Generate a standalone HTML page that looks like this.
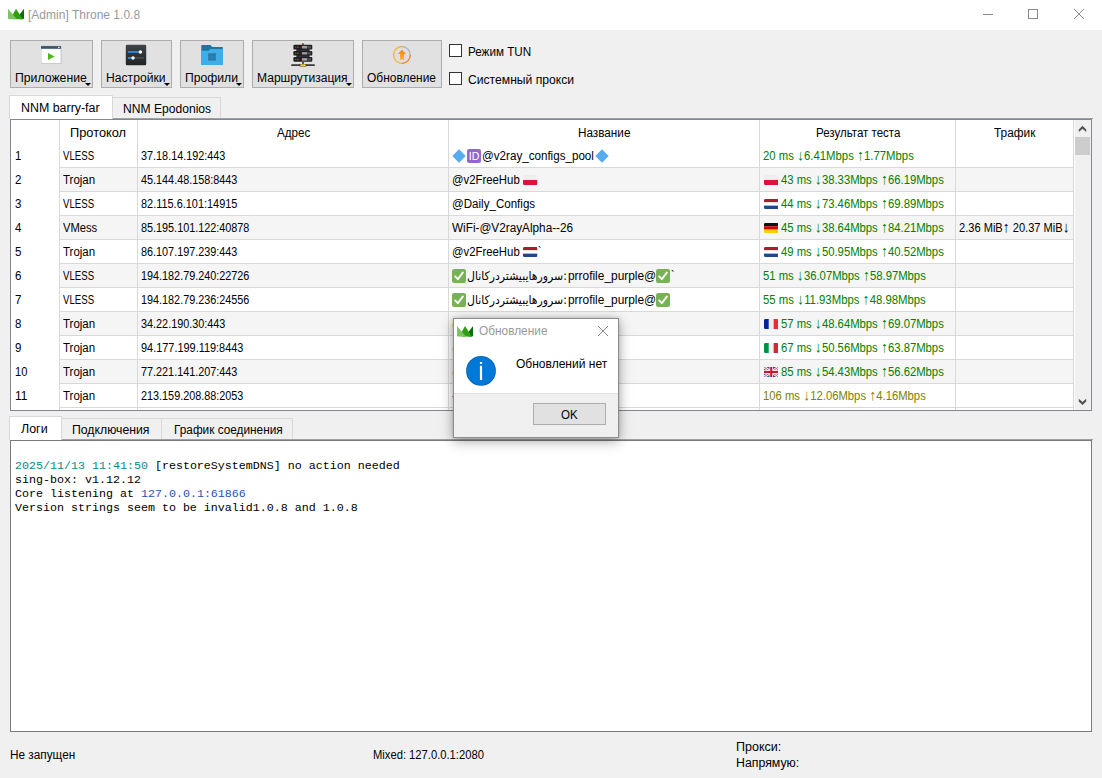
<!DOCTYPE html>
<html lang="ru"><head><meta charset="utf-8"><title>[Admin] Throne 1.0.8</title>
<style>
html,body{margin:0;padding:0;}
body{width:1102px;height:778px;overflow:hidden;background:#f0f0f0;font-family:"Liberation Sans","DejaVu Sans",sans-serif;font-size:12px;}
#win{position:relative;width:1102px;height:778px;overflow:hidden;background:#f0f0f0;}
.a{position:absolute;display:block;}
.t{position:absolute;white-space:nowrap;line-height:14px;font-size:12px;}
.btn{position:absolute;box-sizing:border-box;background:#e1e1e1;border:1px solid #adadad;top:40px;height:48px;}
.arr{position:absolute;width:0;height:0;border-left:3px solid transparent;border-right:3px solid transparent;border-top:3px solid #000;top:83px;}
.cb{position:absolute;box-sizing:border-box;width:13px;height:13px;border:1px solid #333;background:#fff;left:449px;}
.tab{position:absolute;box-sizing:border-box;background:#f0f0f0;border:1px solid #d9d9d9;}
.tab.sel{background:#fff;border-bottom:none;}
.vl{position:absolute;width:1px;background:#d9d9d9;}
.hl{position:absolute;height:1px;background:#d9d9d9;left:60px;width:1014px;}
.alt{position:absolute;left:60px;width:1014px;height:23px;background:#f5f5f5;}
.ar{font-size:15px;line-height:0;}
.log{position:absolute;white-space:pre;font-family:"Liberation Mono","DejaVu Sans Mono",monospace;font-size:11.67px;line-height:14px;left:15px;color:#000;}
</style></head><body><div id="win">
<div class="a" style="left:0;top:0;width:1102px;height:30px;background:#fff"></div>
<svg class="a" style="left:8px;top:8px" width="16" height="12" viewBox="0 0 16 12"><clipPath id="cr8"><path d="M0 0 V9.3 Q0 10.8 1.5 10.8 H14.5 Q16 10.8 16 9.3 V0 Z"/></clipPath><g clip-path="url(#cr8)" transform="translate(0,0.7)"><path d="M16 0 L11.7 5.7 V10.8 H16 Z" fill="#0b6e0b"/><path d="M8 0 L15 10.8 H4.8 V5.7 Z" fill="#2ea012"/><path d="M0 0 V10.8 H9.1 Z" fill="#7cc362"/></g></svg>
<svg class="a" style="left:975px;top:4px" width="120" height="22" viewBox="0 0 120 22" fill="none" stroke="#8a8a8a" stroke-width="1">
<path d="M8 10.5 H18"/><rect x="53.5" y="5.5" width="9" height="9"/><path d="M99 5 L109 15 M109 5 L99 15"/></svg>

<div class="btn" style="left:10px;width:83px"></div>
<div class="btn" style="left:101px;width:71px"></div>
<div class="btn" style="left:180px;width:64px"></div>
<div class="btn" style="left:252px;width:102px"></div>
<div class="btn" style="left:362px;width:80px"></div>
<div class="arr" style="left:85px"></div>
<div class="arr" style="left:164px"></div>
<div class="arr" style="left:236px"></div>
<div class="arr" style="left:346px"></div>

<svg class="a" style="left:41px;top:45px" width="21" height="20" viewBox="0 0 21 20"><rect x="0" y="1.1" width="20" height="17.6" fill="#fff" stroke="#aeb8be" stroke-width="0.7"/><rect x="0" y="1.1" width="20" height="2.7" fill="#3b5566"/><rect x="17" y="1.8" width="1.6" height="1.2" fill="#dfe6ea"/><path d="M7 8 L13.5 11.5 L7 15 Z" fill="#4fb713"/></svg>

<svg class="a" style="left:125px;top:44px" width="22" height="22" viewBox="0 0 22 22"><defs><linearGradient id="gs" x1="0" y1="0" x2="0" y2="1"><stop offset="0" stop-color="#3f4347"/><stop offset="1" stop-color="#212427"/></linearGradient></defs><rect x="0.8" y="0.8" width="20.4" height="20.5" rx="1.2" fill="url(#gs)"/><rect x="2.9" y="13.1" width="16" height="1.7" fill="#4a4d50"/><rect x="18" y="7.2" width="0.9" height="1.5" fill="#4a4d50"/><rect x="2.9" y="7" width="12" height="1.9" fill="#2f86d6"/><rect x="2.9" y="13" width="5" height="1.9" fill="#2f86d6"/><circle cx="15.4" cy="7.9" r="1.75" fill="#fff"/><circle cx="8" cy="13.9" r="1.75" fill="#fff"/></svg>

<svg class="a" style="left:201px;top:45px" width="22" height="20" viewBox="0 0 22 20"><path d="M0.3 0 H9.6 L11.2 2.1 H21.8 V6 H0.3 Z" fill="#2274a0"/><path d="M0 5.8 H7.7 L9.2 4.1 H22 V19.9 H0 Z" fill="#3daee9"/><rect x="7" y="8.1" width="8" height="7.7" fill="#2f88bc"/><g fill="#2a76a6"><rect x="7.6" y="8.9" width="3" height="2.6"/><rect x="11.4" y="8.9" width="3" height="2.6"/><rect x="7.6" y="12.4" width="3" height="2.6"/><rect x="11.4" y="12.4" width="3" height="2.6"/></g></svg>

<svg class="a" style="left:290px;top:42px" width="26" height="25" viewBox="0 0 26 25"><rect x="12" y="1.1" width="1.9" height="2" fill="#8a6d10"/><rect x="6.3" y="7" width="13.3" height="8.6" fill="#2e2f33"/><rect x="3.4" y="2.8" width="18.9" height="4.8" rx="1.2" fill="#1d1e21"/><rect x="11.9" y="3.9" width="5.2" height="2.6" fill="#9b9ba6"/><rect x="17.1" y="3.9" width="3.9" height="2.6" fill="#4c4c54"/><rect x="4.9" y="4.5" width="1.5" height="1.2" fill="#6e5a1c"/><circle cx="7.9" cy="5.2" r="0.75" fill="#4f8f14"/><rect x="9.8" y="4.5" width="1.7" height="1.2" fill="#7c0e16"/><rect x="3.4" y="9.0" width="18.9" height="4.6" rx="1.2" fill="#1d1e21"/><rect x="11.9" y="10.1" width="5.2" height="2.4" fill="#9b9ba6"/><rect x="17.1" y="10.1" width="3.9" height="2.4" fill="#4c4c54"/><rect x="4.9" y="10.6" width="1.5" height="1.2" fill="#6e5a1c"/><circle cx="7.9" cy="11.3" r="0.75" fill="#4f8f14"/><rect x="9.8" y="10.6" width="1.7" height="1.2" fill="#7c0e16"/><rect x="3.4" y="15.0" width="18.9" height="4.8" rx="1.2" fill="#1d1e21"/><rect x="11.9" y="16.1" width="5.2" height="2.6" fill="#9b9ba6"/><rect x="17.1" y="16.1" width="3.9" height="2.6" fill="#4c4c54"/><rect x="4.9" y="16.7" width="1.5" height="1.2" fill="#6e5a1c"/><circle cx="7.9" cy="17.4" r="0.75" fill="#4f8f14"/><rect x="9.8" y="16.7" width="1.7" height="1.2" fill="#7c0e16"/><rect x="12" y="19.8" width="2" height="2.3" fill="#55585c"/><rect x="1.1" y="22.2" width="23.8" height="1.9" rx="0.9" fill="#38393c"/><rect x="9.6" y="21.9" width="6.8" height="2.7" rx="0.7" fill="#2a2b2e"/><rect x="10.2" y="22.3" width="5.6" height="1.9" rx="0.4" fill="#f0cc28"/></svg>

<svg class="a" style="left:392px;top:45px" width="20" height="20" viewBox="0 0 20 20"><defs><linearGradient id="ga" x1="0" y1="0" x2="0" y2="1"><stop offset="0" stop-color="#f67f08"/><stop offset="1" stop-color="#fdb336"/></linearGradient></defs><circle cx="9.9" cy="9.9" r="8.6" fill="#dedfe0"/><g fill="none" stroke-width="1.3"><path d="M9.9 1.5 A8.4 8.4 0 0 0 9.9 18.3" stroke="#fbb03b"/><path d="M9.9 1.5 A8.4 8.4 0 0 1 18.3 9.9" stroke="#b4b4b4"/><path d="M18.3 9.9 A8.4 8.4 0 0 1 9.9 18.3" stroke="#ee7d1a"/></g><path d="M10 4.8 L14.2 8.9 H12 V14.7 H8.1 V8.9 H5.8 Z" fill="url(#ga)"/></svg>

<div class="cb" style="top:44px"></div>
<div class="cb" style="top:72px"></div>

<div class="a" style="left:9px;top:118px;width:1084px;height:1px;background:#a0a0a0"></div>
<div class="tab" style="left:112px;top:97px;width:109px;height:21px;border-bottom:none"></div>
<div class="a" style="left:10px;top:119px;width:1082px;height:292px;box-sizing:border-box;border:1px solid #828790;background:#fff"></div>
<div class="tab sel" style="left:9px;top:95px;width:104px;height:24px"></div>
<div class="alt" style="top:168px"></div>
<div class="alt" style="top:216px"></div>
<div class="alt" style="top:264px"></div>
<div class="alt" style="top:312px"></div>
<div class="alt" style="top:360px"></div>
<div class="hl" style="top:167px"></div>
<div class="hl" style="top:191px"></div>
<div class="hl" style="top:215px"></div>
<div class="hl" style="top:239px"></div>
<div class="hl" style="top:263px"></div>
<div class="hl" style="top:287px"></div>
<div class="hl" style="top:311px"></div>
<div class="hl" style="top:335px"></div>
<div class="hl" style="top:359px"></div>
<div class="hl" style="top:383px"></div>
<div class="hl" style="top:407px"></div>
<div class="vl" style="left:59px;top:120px;height:290px"></div>
<div class="vl" style="left:137px;top:120px;height:290px"></div>
<div class="vl" style="left:448px;top:120px;height:290px"></div>
<div class="vl" style="left:759px;top:120px;height:290px"></div>
<div class="vl" style="left:955px;top:120px;height:290px"></div>
<div class="vl" style="left:1073px;top:120px;height:290px"></div>

<div class="a" style="left:1075px;top:120px;width:16px;height:290px;background:#f0f0f0"></div>
<div class="a" style="left:1075px;top:137px;width:15px;height:18px;background:#cdcdcd"></div>
<svg class="a" style="left:1074px;top:120px" width="17" height="290" viewBox="0 0 17 290" fill="#505050"><path d="M8.5 5.7 L12.2 9.4 V12 L8.5 8.7 L4.8 12 V9.4 Z"/><path d="M4.8 278.8 L8.5 282.1 L12.2 278.8 V281.4 L8.5 285.1 L4.8 281.4 Z"/></svg>

<div class="a" style="left:9px;top:439px;width:1084px;height:1px;background:#a0a0a0"></div>
<div class="tab" style="left:61px;top:418px;width:101px;height:21px;border-bottom:none"></div>
<div class="tab" style="left:161px;top:418px;width:132px;height:21px;border-bottom:none"></div>
<div class="a" style="left:10px;top:440px;width:1082px;height:292px;box-sizing:border-box;border:1px solid #7a7a7a;background:#fff"></div>
<div class="tab sel" style="left:9px;top:416px;width:53px;height:24px"></div>
<svg class="a" style="left:452px;top:149px" width="14" height="14" viewBox="0 0 14 14"><path d="M7 0.3 L13.7 7 L7 13.7 L0.3 7 Z" fill="#55acee"/></svg>
<svg class="a" style="left:467px;top:149px" width="14" height="14" viewBox="0 0 14 14"><rect width="14" height="14" rx="2.2" fill="#9266cc"/><text x="7.1" y="11.1" text-anchor="middle" font-family="Liberation Sans,sans-serif" font-size="11.5" fill="#fff" textLength="10.6" lengthAdjust="spacingAndGlyphs">ID</text></svg>
<svg class="a" style="left:594.5px;top:149px" width="14" height="14" viewBox="0 0 14 14"><path d="M7 0.3 L13.7 7 L7 13.7 L0.3 7 Z" fill="#55acee"/></svg>
<svg class="a" style="left:523.1px;top:175px" width="14.5" height="10" viewBox="0 0 15 11" preserveAspectRatio="none"><clipPath id="cpl1523"><rect width="15" height="11" rx="1.5"/></clipPath><g clip-path="url(#cpl1523)"><rect width="15" height="5.5" fill="#eeeeee"/><rect y="5.5" width="15" height="5.5" fill="#dc143c"/></g></svg>
<svg class="a" style="left:523.1px;top:247px" width="14.5" height="10" viewBox="0 0 15 11" preserveAspectRatio="none"><clipPath id="cnl4523"><rect width="15" height="11" rx="1.5"/></clipPath><g clip-path="url(#cnl4523)"><rect width="15" height="3.7" fill="#ae1c28"/><rect y="3.7" width="15" height="3.6" fill="#fff"/><rect y="7.3" width="15" height="3.7" fill="#21468b"/></g></svg>
<svg class="a" style="left:452px;top:269px" width="14" height="14" viewBox="0 0 14 14"><rect width="14" height="14" rx="2.2" fill="#77b255"/><path d="M3.2 7.4 L5.8 10.2 L10.8 3.6" fill="none" stroke="#fff" stroke-width="1.9" stroke-linecap="round" stroke-linejoin="round"/></svg>
<svg class="a" style="left:656px;top:269px" width="14" height="14" viewBox="0 0 14 14"><rect width="14" height="14" rx="2.2" fill="#77b255"/><path d="M3.2 7.4 L5.8 10.2 L10.8 3.6" fill="none" stroke="#fff" stroke-width="1.9" stroke-linecap="round" stroke-linejoin="round"/></svg>
<svg class="a" style="left:452px;top:293px" width="14" height="14" viewBox="0 0 14 14"><rect width="14" height="14" rx="2.2" fill="#77b255"/><path d="M3.2 7.4 L5.8 10.2 L10.8 3.6" fill="none" stroke="#fff" stroke-width="1.9" stroke-linecap="round" stroke-linejoin="round"/></svg>
<svg class="a" style="left:656px;top:293px" width="14" height="14" viewBox="0 0 14 14"><rect width="14" height="14" rx="2.2" fill="#77b255"/><path d="M3.2 7.4 L5.8 10.2 L10.8 3.6" fill="none" stroke="#fff" stroke-width="1.9" stroke-linecap="round" stroke-linejoin="round"/></svg>
<svg class="a" style="left:763.5px;top:175px" width="14.5" height="10" viewBox="0 0 15 11" preserveAspectRatio="none"><clipPath id="cpl1763"><rect width="15" height="11" rx="1.5"/></clipPath><g clip-path="url(#cpl1763)"><rect width="15" height="5.5" fill="#eeeeee"/><rect y="5.5" width="15" height="5.5" fill="#dc143c"/></g></svg>
<svg class="a" style="left:763.5px;top:199px" width="14.5" height="10" viewBox="0 0 15 11" preserveAspectRatio="none"><clipPath id="cnl2763"><rect width="15" height="11" rx="1.5"/></clipPath><g clip-path="url(#cnl2763)"><rect width="15" height="3.7" fill="#ae1c28"/><rect y="3.7" width="15" height="3.6" fill="#fff"/><rect y="7.3" width="15" height="3.7" fill="#21468b"/></g></svg>
<svg class="a" style="left:763.5px;top:223px" width="14.5" height="10" viewBox="0 0 15 11" preserveAspectRatio="none"><clipPath id="cde3763"><rect width="15" height="11" rx="1.5"/></clipPath><g clip-path="url(#cde3763)"><rect width="15" height="3.7" fill="#111"/><rect y="3.7" width="15" height="3.6" fill="#dd0000"/><rect y="7.3" width="15" height="3.7" fill="#ffce00"/></g></svg>
<svg class="a" style="left:763.5px;top:247px" width="14.5" height="10" viewBox="0 0 15 11" preserveAspectRatio="none"><clipPath id="cnl4763"><rect width="15" height="11" rx="1.5"/></clipPath><g clip-path="url(#cnl4763)"><rect width="15" height="3.7" fill="#ae1c28"/><rect y="3.7" width="15" height="3.6" fill="#fff"/><rect y="7.3" width="15" height="3.7" fill="#21468b"/></g></svg>
<svg class="a" style="left:763.5px;top:319px" width="14.5" height="10" viewBox="0 0 15 11" preserveAspectRatio="none"><clipPath id="cfr7763"><rect width="15" height="11" rx="1.5"/></clipPath><g clip-path="url(#cfr7763)"><rect width="5" height="11" fill="#002395"/><rect x="5" width="5" height="11" fill="#eee"/><rect x="10" width="5" height="11" fill="#ed2939"/></g></svg>
<svg class="a" style="left:763.5px;top:343px" width="14.5" height="10" viewBox="0 0 15 11" preserveAspectRatio="none"><clipPath id="cit8763"><rect width="15" height="11" rx="1.5"/></clipPath><g clip-path="url(#cit8763)"><rect width="5" height="11" fill="#009246"/><rect x="5" width="5" height="11" fill="#f1f2f1"/><rect x="10" width="5" height="11" fill="#ce2b37"/></g></svg>
<svg class="a" style="left:763.5px;top:367px" width="14.5" height="10" viewBox="0 0 15 11" preserveAspectRatio="none"><clipPath id="cgb9763"><rect width="15" height="11" rx="1.5"/></clipPath><g clip-path="url(#cgb9763)"><rect width="15" height="11" fill="#3d4c98"/><path d="M0 0 L15 11 M15 0 L0 11" stroke="#fff" stroke-width="2.8"/><path d="M0 0 L15 11 M15 0 L0 11" stroke="#cf142b" stroke-width="0.8"/><path d="M7.5 0 V11 M0 5.5 H15" stroke="#fff" stroke-width="3.6"/><path d="M7.5 0 V11 M0 5.5 H15" stroke="#cf142b" stroke-width="2.2"/></g></svg>
<span class="t" style="left:28.3px;top:8.0px;color:#999;transform:scaleX(1.0023);transform-origin:0 0;">[Admin] Throne 1.0.8</span>
<span class="t" style="left:15.2px;top:71.0px;color:#000;transform:scaleX(1.0200);transform-origin:0 0;">Приложение</span>
<span class="t" style="left:106.2px;top:71.0px;color:#000;transform:scaleX(1.0112);transform-origin:0 0;">Настройки</span>
<span class="t" style="left:185.1px;top:71.0px;color:#000;transform:scaleX(1.0141);transform-origin:0 0;">Профили</span>
<span class="t" style="left:257.0px;top:71.0px;color:#000;transform:scaleX(1.0056);transform-origin:0 0;">Маршрутизация</span>
<span class="t" style="left:367.4px;top:71.0px;color:#000;transform:scaleX(0.9957);transform-origin:0 0;">Обновление</span>
<span class="t" style="left:467.6px;top:45.0px;color:#000;transform:scaleX(0.9708);transform-origin:0 0;">Режим TUN</span>
<span class="t" style="left:467.6px;top:73.0px;color:#000;transform:scaleX(1.0115);transform-origin:0 0;">Системный прокси</span>
<span class="t" style="left:21.2px;top:101.0px;color:#000;transform:scaleX(1.0340);transform-origin:0 0;">NNM barry-far</span>
<span class="t" style="left:123.3px;top:102.0px;color:#000;transform:scaleX(1.0083);transform-origin:0 0;">NNM Epodonios</span>
<span class="t" style="left:70.3px;top:126.0px;color:#000;transform:scaleX(1.0676);transform-origin:0 0;">Протокол</span>
<span class="t" style="left:277.0px;top:126.0px;color:#000;transform:scaleX(0.9721);transform-origin:0 0;">Адрес</span>
<span class="t" style="left:578.0px;top:126.0px;color:#000;transform:scaleX(0.9772);transform-origin:0 0;">Название</span>
<span class="t" style="left:816.0px;top:126.0px;color:#000;transform:scaleX(0.9593);transform-origin:0 0;">Результат теста</span>
<span class="t" style="left:994.0px;top:126.0px;color:#000;transform:scaleX(0.9894);transform-origin:0 0;">Трафик</span>
<span class="t" style="left:15.0px;top:149.0px;color:#000;transform:scaleX(0.9570);transform-origin:0 0;">1</span>
<span class="t" style="left:63.0px;top:149.0px;color:#000;transform:scaleX(0.8036);transform-origin:0 0;">VLESS</span>
<span class="t" style="left:141.0px;top:149.0px;color:#000;transform:scaleX(0.9034);transform-origin:0 0;">37.18.14.192:443</span>
<span class="t" style="left:15.0px;top:173.0px;color:#000;transform:scaleX(0.9570);transform-origin:0 0;">2</span>
<span class="t" style="left:63.0px;top:173.0px;color:#000;transform:scaleX(0.9560);transform-origin:0 0;">Trojan</span>
<span class="t" style="left:141.0px;top:173.0px;color:#000;transform:scaleX(0.9028);transform-origin:0 0;">45.144.48.158:8443</span>
<span class="t" style="left:15.0px;top:197.0px;color:#000;transform:scaleX(0.9570);transform-origin:0 0;">3</span>
<span class="t" style="left:63.0px;top:197.0px;color:#000;transform:scaleX(0.8036);transform-origin:0 0;">VLESS</span>
<span class="t" style="left:141.0px;top:197.0px;color:#000;transform:scaleX(0.9104);transform-origin:0 0;">82.115.6.101:14915</span>
<span class="t" style="left:15.0px;top:221.0px;color:#000;transform:scaleX(0.9570);transform-origin:0 0;">4</span>
<span class="t" style="left:63.0px;top:221.0px;color:#000;transform:scaleX(0.9322);transform-origin:0 0;">VMess</span>
<span class="t" style="left:141.0px;top:221.0px;color:#000;transform:scaleX(0.9024);transform-origin:0 0;">85.195.101.122:40878</span>
<span class="t" style="left:15.0px;top:245.0px;color:#000;transform:scaleX(0.9570);transform-origin:0 0;">5</span>
<span class="t" style="left:63.0px;top:245.0px;color:#000;transform:scaleX(0.9560);transform-origin:0 0;">Trojan</span>
<span class="t" style="left:141.0px;top:245.0px;color:#000;transform:scaleX(0.9028);transform-origin:0 0;">86.107.197.239:443</span>
<span class="t" style="left:15.0px;top:269.0px;color:#000;transform:scaleX(0.9570);transform-origin:0 0;">6</span>
<span class="t" style="left:63.0px;top:269.0px;color:#000;transform:scaleX(0.8036);transform-origin:0 0;">VLESS</span>
<span class="t" style="left:141.0px;top:269.0px;color:#000;transform:scaleX(0.9024);transform-origin:0 0;">194.182.79.240:22726</span>
<span class="t" style="left:15.0px;top:293.0px;color:#000;transform:scaleX(0.9570);transform-origin:0 0;">7</span>
<span class="t" style="left:63.0px;top:293.0px;color:#000;transform:scaleX(0.8036);transform-origin:0 0;">VLESS</span>
<span class="t" style="left:141.0px;top:293.0px;color:#000;transform:scaleX(0.9024);transform-origin:0 0;">194.182.79.236:24556</span>
<span class="t" style="left:15.0px;top:317.0px;color:#000;transform:scaleX(0.9570);transform-origin:0 0;">8</span>
<span class="t" style="left:63.0px;top:317.0px;color:#000;transform:scaleX(0.9560);transform-origin:0 0;">Trojan</span>
<span class="t" style="left:141.0px;top:317.0px;color:#000;transform:scaleX(0.9034);transform-origin:0 0;">34.22.190.30:443</span>
<span class="t" style="left:15.0px;top:341.0px;color:#000;transform:scaleX(0.9570);transform-origin:0 0;">9</span>
<span class="t" style="left:63.0px;top:341.0px;color:#000;transform:scaleX(0.9560);transform-origin:0 0;">Trojan</span>
<span class="t" style="left:141.0px;top:341.0px;color:#000;transform:scaleX(0.9097);transform-origin:0 0;">94.177.199.119:8443</span>
<span class="t" style="left:15.0px;top:365.0px;color:#000;transform:scaleX(0.9282);transform-origin:0 0;">10</span>
<span class="t" style="left:63.0px;top:365.0px;color:#000;transform:scaleX(0.9560);transform-origin:0 0;">Trojan</span>
<span class="t" style="left:141.0px;top:365.0px;color:#000;transform:scaleX(0.9028);transform-origin:0 0;">77.221.141.207:443</span>
<span class="t" style="left:15.0px;top:389.0px;color:#000;transform:scaleX(0.9945);transform-origin:0 0;">11</span>
<span class="t" style="left:63.0px;top:389.0px;color:#000;transform:scaleX(0.9560);transform-origin:0 0;">Trojan</span>
<span class="t" style="left:141.0px;top:389.0px;color:#000;transform:scaleX(0.9026);transform-origin:0 0;">213.159.208.88:2053</span>
<span class="t" style="left:763.4px;top:149.0px;color:#008000;transform:scaleX(0.9439);transform-origin:0 0;">20 ms <span class="ar">↓</span>6.41Mbps <span class="ar">↑</span>1.77Mbps</span>
<span class="t" style="left:781.0px;top:173.0px;color:#008000;transform:scaleX(0.9404);transform-origin:0 0;">43 ms <span class="ar">↓</span>38.33Mbps <span class="ar">↑</span>66.19Mbps</span>
<span class="t" style="left:781.0px;top:197.0px;color:#008000;transform:scaleX(0.9404);transform-origin:0 0;">44 ms <span class="ar">↓</span>73.46Mbps <span class="ar">↑</span>69.89Mbps</span>
<span class="t" style="left:781.0px;top:221.0px;color:#008000;transform:scaleX(0.9404);transform-origin:0 0;">45 ms <span class="ar">↓</span>38.64Mbps <span class="ar">↑</span>84.21Mbps</span>
<span class="t" style="left:781.0px;top:245.0px;color:#008000;transform:scaleX(0.9404);transform-origin:0 0;">49 ms <span class="ar">↓</span>50.95Mbps <span class="ar">↑</span>40.52Mbps</span>
<span class="t" style="left:763.4px;top:269.0px;color:#008000;transform:scaleX(0.9404);transform-origin:0 0;">51 ms <span class="ar">↓</span>36.07Mbps <span class="ar">↑</span>58.97Mbps</span>
<span class="t" style="left:763.4px;top:293.0px;color:#008000;transform:scaleX(0.9453);transform-origin:0 0;">55 ms <span class="ar">↓</span>11.93Mbps <span class="ar">↑</span>48.98Mbps</span>
<span class="t" style="left:781.0px;top:317.0px;color:#008000;transform:scaleX(0.9404);transform-origin:0 0;">57 ms <span class="ar">↓</span>48.64Mbps <span class="ar">↑</span>69.07Mbps</span>
<span class="t" style="left:781.0px;top:341.0px;color:#008000;transform:scaleX(0.9404);transform-origin:0 0;">67 ms <span class="ar">↓</span>50.56Mbps <span class="ar">↑</span>63.87Mbps</span>
<span class="t" style="left:781.0px;top:365.0px;color:#008000;transform:scaleX(0.9404);transform-origin:0 0;">85 ms <span class="ar">↓</span>54.43Mbps <span class="ar">↑</span>56.62Mbps</span>
<span class="t" style="left:763.4px;top:389.0px;color:#808000;transform:scaleX(0.9404);transform-origin:0 0;">106 ms <span class="ar">↓</span>12.06Mbps <span class="ar">↑</span>4.16Mbps</span>
<span class="t" style="left:959.2px;top:221.0px;color:#000;transform:scaleX(0.9237);transform-origin:0 0;">2.36 MiB<span class="ar">↑</span> 20.37 MiB<span class="ar">↓</span></span>
<span class="t" style="left:481.8px;top:149.0px;color:#000;transform:scaleX(0.9680);transform-origin:0 0;">@v2ray_configs_pool</span>
<span class="t" style="left:452.3px;top:173.0px;color:#000;transform:scaleX(0.9462);transform-origin:0 0;">@v2FreeHub</span>
<span class="t" style="left:452.3px;top:197.0px;color:#000;transform:scaleX(0.9638);transform-origin:0 0;">@Daily_Configs</span>
<span class="t" style="left:452.3px;top:221.0px;color:#000;transform:scaleX(0.9802);transform-origin:0 0;">WiFi-@V2rayAlpha--26</span>
<span class="t" style="left:452.3px;top:245.0px;color:#000;transform:scaleX(0.9462);transform-origin:0 0;">@v2FreeHub</span>
<span class="t" style="left:538.4px;top:245.0px;color:#000;transform:scaleX(0.8500);transform-origin:0 0;">`</span>
<span class="t" style="left:467.2px;top:269.0px;color:#000;font-family:'DejaVu Sans',sans-serif;font-size:12px;transform:scaleX(0.9068);transform-origin:0 0;">سرورهایبیشتردرکانال:</span>
<span class="t" style="left:567.8px;top:269.0px;color:#000;transform:scaleX(0.9921);transform-origin:0 0;">prrofile_purple@</span>
<span class="t" style="left:467.2px;top:293.0px;color:#000;font-family:'DejaVu Sans',sans-serif;font-size:12px;transform:scaleX(0.9068);transform-origin:0 0;">سرورهایبیشتردرکانال:</span>
<span class="t" style="left:567.8px;top:293.0px;color:#000;transform:scaleX(0.9921);transform-origin:0 0;">prrofile_purple@</span>
<span class="t" style="left:671.0px;top:269.0px;color:#000;transform:scaleX(0.8500);transform-origin:0 0;">`</span>
<span class="t" style="left:452.3px;top:317.0px;color:#000;transform:scaleX(0.9462);transform-origin:0 0;">@v2FreeHub</span>
<span class="t" style="left:452.3px;top:341.0px;color:#000;transform:scaleX(0.9462);transform-origin:0 0;">@v2FreeHub</span>
<span class="t" style="left:452.3px;top:365.0px;color:#000;transform:scaleX(0.9462);transform-origin:0 0;">@v2FreeHub</span>
<span class="t" style="left:452.3px;top:389.0px;color:#000;transform:scaleX(0.9985);transform-origin:0 0;">-@V2rayAlpha</span>
<span class="t" style="left:21.1px;top:422.0px;color:#000;transform:scaleX(1.0374);transform-origin:0 0;">Логи</span>
<span class="t" style="left:72.3px;top:423.0px;color:#000;transform:scaleX(1.0208);transform-origin:0 0;">Подключения</span>
<span class="t" style="left:174.4px;top:423.0px;color:#000;transform:scaleX(0.9847);transform-origin:0 0;">График соединения</span>
<span class="t" style="left:9.8px;top:748.0px;color:#000;transform:scaleX(0.9821);transform-origin:0 0;">Не запущен</span>
<span class="t" style="left:372.5px;top:748.0px;color:#000;transform:scaleX(0.9338);transform-origin:0 0;">Mixed: 127.0.0.1:2080</span>
<span class="t" style="left:735.5px;top:740.0px;color:#000;transform:scaleX(1.0436);transform-origin:0 0;">Прокси:</span>
<span class="t" style="left:735.5px;top:756.0px;color:#000;transform:scaleX(1.0277);transform-origin:0 0;">Напрямую:</span>
<div class="log" style="top:459px"><span style="color:#0a8a8a">2025/11/13 11:41:50</span> [restoreSystemDNS] no action needed</div>
<div class="log" style="top:473px">sing-box: v1.12.12</div>
<div class="log" style="top:487px">Core listening at <span style="color:#1d52b3">127.0.0.1:61866</span></div>
<div class="log" style="top:501px">Version strings seem to be invalid1.0.8 and 1.0.8</div>
<div class="a" style="left:453px;top:318px;width:166px;height:120px;box-sizing:border-box;border:1px solid #8c8c8c;background:#fff;box-shadow:0 3px 12px rgba(0,0,0,0.35),0 0 4px rgba(0,0,0,0.15)"></div>
<div class="a" style="left:454px;top:393px;width:164px;height:44px;background:#f0f0f0;border-top:1px solid #dfdfdf;box-sizing:border-box"></div>
<svg class="a" style="left:457px;top:326px" width="16" height="12" viewBox="0 0 16 12"><clipPath id="cr457"><path d="M0 0 V9.3 Q0 10.8 1.5 10.8 H14.5 Q16 10.8 16 9.3 V0 Z"/></clipPath><g clip-path="url(#cr457)" transform="translate(0,0)"><path d="M16 0 L11.7 5.7 V10.8 H16 Z" fill="#0b6e0b"/><path d="M8 0 L15 10.8 H4.8 V5.7 Z" fill="#2ea012"/><path d="M0 0 V10.8 H9.1 Z" fill="#7cc362"/></g></svg>
<svg class="a" style="left:596px;top:324px" width="14" height="14" viewBox="0 0 14 14" fill="none" stroke="#8a8a8a" stroke-width="1"><path d="M2 2 L12 12 M12 2 L2 12"/></svg>
<svg class="a" style="left:465px;top:355px" width="32" height="32" viewBox="0 0 32 32"><circle cx="16" cy="15.9" r="14.9" fill="#0063b1"/><circle cx="16" cy="15.9" r="14.1" fill="#0078d7"/><rect x="14.9" y="10.8" width="2.2" height="14.2" fill="#fff"/><rect x="14.9" y="7" width="2.2" height="1.9" fill="#fff"/></svg>
<div class="a" style="left:533px;top:403px;width:73px;height:22px;box-sizing:border-box;border:1px solid #adadad;background:#e1e1e1"></div>
<span class="t" style="left:478.6px;top:324.0px;color:#999;transform:scaleX(0.9885);transform-origin:0 0;">Обновление</span>
<span class="t" style="left:516.2px;top:357.0px;color:#000;transform:scaleX(1.0015);transform-origin:0 0;">Обновлений нет</span>
<span class="t" style="left:561.0px;top:408.0px;color:#000;transform:scaleX(0.9629);transform-origin:0 0;">OK</span>
</div>
</body></html>
